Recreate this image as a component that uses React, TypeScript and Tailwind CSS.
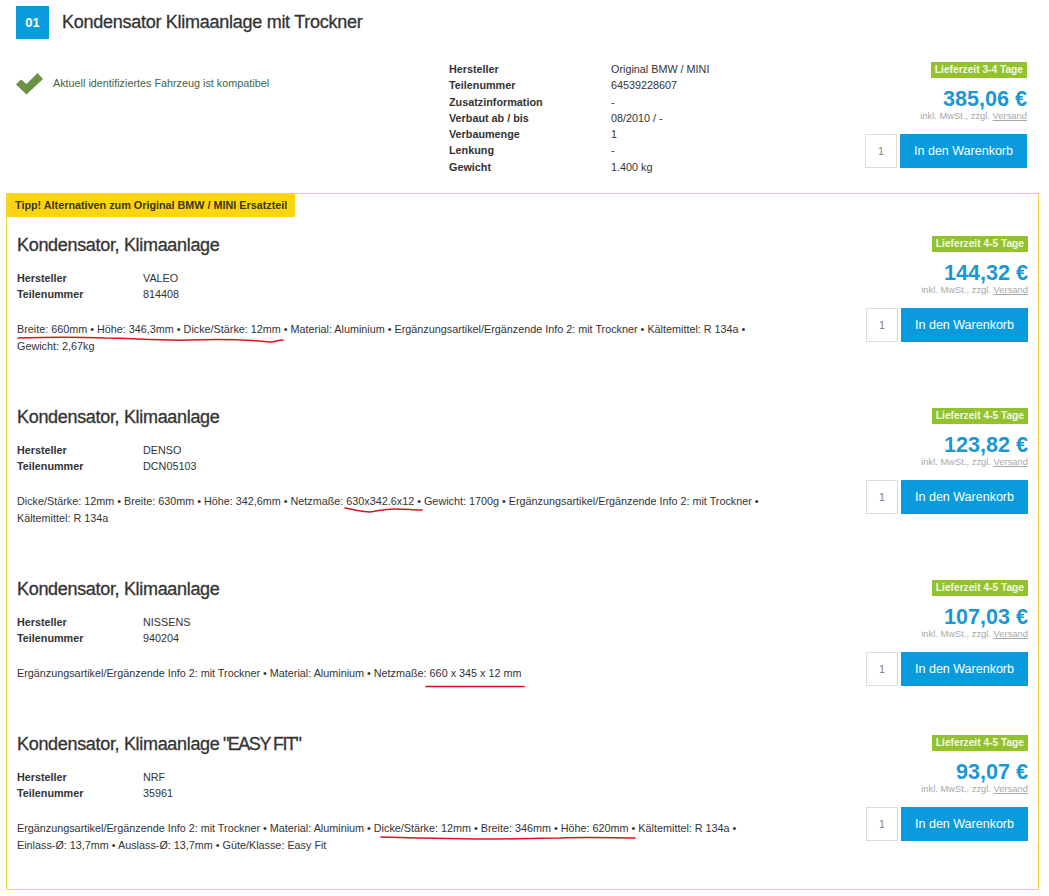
const specs = [
  ["Hersteller", "Original BMW / MINI"],
  ["Teilenummer", "64539228607"],
  ["Zusatzinformation", "-"],
  ["Verbaut ab / bis", "08/2010 / -"],
  ["Verbaumenge", "1"],
  ["Lenkung", "-"],
  ["Gewicht", "1.400 kg"],
];

const items = [
  {
    title: "Kondensator, Klimaanlage",
    extra: "",
    maker: "VALEO",
    number: "814408",
    price: "144,32 €",
    desc: "Breite: 660mm • Höhe: 346,3mm • Dicke/Stärke: 12mm • Material: Aluminium • Ergänzungsartikel/Ergänzende Info 2: mit Trockner • Kältemittel: R 134a • Gewicht: 2,67kg",
  },
  {
    title: "Kondensator, Klimaanlage",
    extra: "",
    maker: "DENSO",
    number: "DCN05103",
    price: "123,82 €",
    desc: "Dicke/Stärke: 12mm • Breite: 630mm • Höhe: 342,6mm • Netzmaße: 630x342.6x12 • Gewicht: 1700g • Ergänzungsartikel/Ergänzende Info 2: mit Trockner • Kältemittel: R 134a",
  },
  {
    title: "Kondensator, Klimaanlage",
    extra: "",
    maker: "NISSENS",
    number: "940204",
    price: "107,03 €",
    desc: "Ergänzungsartikel/Ergänzende Info 2: mit Trockner • Material: Aluminium • Netzmaße: 660 x 345 x 12 mm",
  },
  {
    title: "Kondensator, Klimaanlage",
    extra: ' "EASY FIT"',
    maker: "NRF",
    number: "35961",
    price: "93,07 €",
    desc: "Ergänzungsartikel/Ergänzende Info 2: mit Trockner • Material: Aluminium • Dicke/Stärke: 12mm • Breite: 346mm • Höhe: 620mm • Kältemittel: R 134a • Einlass-Ø: 13,7mm • Auslass-Ø: 13,7mm • Güte/Klasse: Easy Fit",
  },
];

function Buy({ time, price }: { time: string; price: string }) {
  return (
    <div className="flex w-[162px] shrink-0 flex-col items-end">
      <div className="flex h-[16px] items-center bg-[#93c22f] px-[4px] text-[10.2px] font-bold text-[#f4f9e6]">{time}</div>
      <div className="mt-[9px] h-[24px] text-[21.6px] leading-[24px] font-bold text-[#1b97d5]">{price}</div>
      <div className="h-[12px] text-[9.4px] leading-[10px] text-[#a8a8a8]">
        inkl. MwSt., zzgl. <span className="underline">Versand</span>
      </div>
      <div className="mt-[11px] flex w-full justify-between">
        <div className="flex h-[34px] w-[32px] items-center justify-center border border-[#dddddd] text-[10.8px] text-[#808080]">1</div>
        <div className="flex h-[34px] w-[127px] items-center justify-center bg-[#0a9bdf] text-[12.5px] text-white">In den Warenkorb</div>
      </div>
    </div>
  );
}

function Item({ item }: { item: (typeof items)[number] }) {
  return (
    <div className="flex justify-between pr-[10px] pl-[10px]">
      <div className="w-[760px] pb-[48px]">
        <h2 className="h-[28px] text-[18px] leading-[28px] tracking-[-0.32px] text-[#333333] [-webkit-text-stroke:0.3px_#333333]">
          {item.title}
          <span className="tracking-[-1.5px]">{item.extra}</span>
        </h2>
        <div className="mt-[11px] text-[10.8px] leading-[16px] text-[#333333]">
          <div className="flex">
            <span className="w-[126px] font-bold">Hersteller</span>
            <span>{item.maker}</span>
          </div>
          <div className="flex">
            <span className="w-[126px] font-bold">Teilenummer</span>
            <span>{item.number}</span>
          </div>
        </div>
        <p className="mt-[19px] text-[10.8px] leading-[17px] text-[#333333]">{item.desc}</p>
      </div>
      <div className="pt-[5px]">
        <Buy time="Lieferzeit 4-5 Tage" price={item.price} />
      </div>
    </div>
  );
}

export default function App() {
  return (
    <div className="relative h-[896px] w-[1049px] overflow-hidden bg-white font-['Liberation_Sans',Arial,sans-serif]">
      <header className="flex items-center gap-[13px] pt-[6px] pl-[16px]">
        <div className="flex h-[33px] w-[33px] items-center justify-center bg-[#0a9bdf] text-[13px] font-bold text-white">01</div>
        <h1 className="text-[18px] tracking-[-0.27px] text-[#333333] [-webkit-text-stroke:0.3px_#333333]">Kondensator Klimaanlage mit Trockner</h1>
      </header>

      <section className="mt-[23px] flex h-[131px] pr-[22px] pl-[16px]">
        <div className="flex w-[433px] items-start gap-[10px] pt-[11px]">
          <svg width="27" height="22" viewBox="0 0 27 22" className="shrink-0">
            <path d="M0 11.5 L5 6.5 L10.5 11 L21.5 0 L27 6 L10.5 21.5 Z" fill="#6b9344" />
          </svg>
          <span className="pt-[3px] text-[10.8px] leading-[14px] text-[#3f6440]">Aktuell identifiziertes Fahrzeug ist kompatibel</span>
        </div>
        <div className="-mt-[1px] flex-1 text-[10.8px] leading-[16.3px] text-[#333333]">
          {specs.map(([label, value]) => (
            <div key={label} className="flex">
              <span className="w-[162px] font-bold">{label}</span>
              <span>{value}</span>
            </div>
          ))}
        </div>
        <Buy time="Lieferzeit 3-4 Tage" price="385,06 €" />
      </section>

      <section className="ml-[6px] h-[697px] w-[1033px] border border-[#f0d63c]">
        <div className="flex h-[23px] w-[288px] items-center bg-[#fdd50f] pl-[8px] text-[10.8px] font-bold text-[#3a3520]">
          Tipp! Alternativen zum Original BMW / MINI Ersatzteil
        </div>
        <div className="pt-[14px]">
          {items.map((item) => (
            <Item key={item.number} item={item} />
          ))}
        </div>
      </section>

      <svg width="1049" height="896" className="pointer-events-none absolute top-0 left-0" fill="none" stroke="#e2101c" strokeWidth="1.5" strokeLinecap="round">
        <path d="M18 338 C50 337 80 337 105 338 C130 338 160 341 190 340 C220 339 250 340 270 342 C275 342 278 340 283 340" />
        <path d="M345 508 C355 510 362 512 370 512 C378 511 385 509 395 509 C405 509 414 510 422 510" />
        <path d="M426 686.5 L524 686.5" />
        <path d="M381 837 C420 838 460 839 495 839 C520 839 540 838 560 838 C590 837 615 838 635 838" />
      </svg>
    </div>
  );
}
